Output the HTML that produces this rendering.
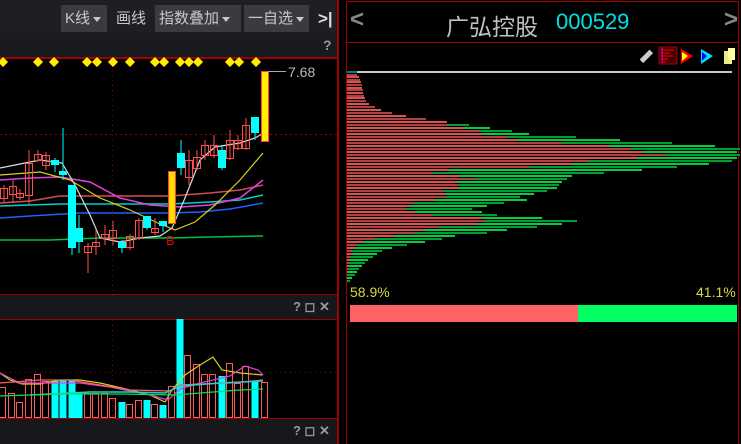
<!DOCTYPE html>
<html><head><meta charset="utf-8"><style>
*{margin:0;padding:0;box-sizing:border-box}
body{width:741px;height:444px;background:#000;overflow:hidden;position:relative;font-family:"Liberation Sans","Noto Sans CJK SC",sans-serif}
.a{position:absolute}
.btn{position:absolute;top:5px;height:27px;background:#3a3b41;color:#c8c8c8;font-size:15px;line-height:27px;padding:0 4px;white-space:nowrap}
.tri{display:inline-block;border-left:4px solid transparent;border-right:4px solid transparent;border-top:5px solid #c8c8c8;vertical-align:middle;margin-left:3px}
.hdr{position:absolute;left:0;width:338px;background:#17181c}
.ic{position:absolute;color:#9a9a9a;font-size:14px;font-weight:bold}
</style></head><body>
<div class="a" style="left:0;top:0;width:338px;height:33px;background:#1e1f25"></div>
<div class="btn" style="left:61px;width:46px">K线<span class="tri"></span></div>
<div class="a" style="left:116px;top:5px;color:#c8c8c8;font-size:15px;line-height:27px">画线</div>
<div class="btn" style="left:155px;width:86px">指数叠加<span class="tri"></span></div>
<div class="btn" style="left:244px;width:65px">一自选<span class="tri"></span></div>
<div class="a" style="left:318px;top:5px;color:#ddd;font-size:17px;font-weight:bold;line-height:27px">&gt;|</div>
<div class="hdr" style="top:33px;height:25px;background:#1a1b20"></div>
<div class="ic" style="left:323px;top:37px">?</div>
<div class="a" style="left:0;top:57px;width:338px;height:2px;background:#a00000"></div>
<div class="hdr" style="top:295px;height:24px"></div>
<div class="ic" style="left:293px;top:299px;font-size:13px">? ◻ ✕</div>
<div class="a" style="left:0;top:319px;width:338px;height:1px;background:#a00000"></div>
<div class="a" style="left:0;top:418px;width:338px;height:1px;background:#a00000"></div>
<div class="hdr" style="top:419px;height:25px"></div>
<div class="ic" style="left:293px;top:423px;font-size:13px">? ◻ ✕</div>
<div class="a" style="left:337px;top:0;width:2px;height:444px;background:#a00000"></div>
<div class="a" style="left:0;top:294px;width:338px;height:1px;background:#a00000"></div>
<div class="a" style="left:346px;top:1px;width:393px;height:443px;border:1px solid #a00000;border-bottom:none"></div>
<div class="a" style="left:346px;top:42px;width:393px;height:1px;background:#a00000"></div>
<div class="a" style="left:350px;top:6px;color:#888;font-size:24px;font-weight:bold">&lt;</div>
<div class="a" style="left:724px;top:6px;color:#888;font-size:24px;font-weight:bold">&gt;</div>
<div class="a" style="left:446px;top:8px;color:#c0c0c0;font-size:23px;font-family:'Noto Sans CJK SC',sans-serif">广弘控股</div>
<div class="a" style="left:556px;top:9px;color:#00e0e0;font-size:22px">000529</div>
<div class="a" style="left:350px;top:284px;color:#d8d840;font-size:14px">58.9%</div>
<div class="a" style="left:696px;top:284px;color:#d8d840;font-size:14px">41.1%</div>
<div class="a" style="left:350px;top:305px;width:228px;height:17px;background:#ff6262"></div>
<div class="a" style="left:578px;top:305px;width:159px;height:17px;background:#00ff60"></div>
<svg class="a" style="left:0;top:0" width="741" height="444" id="s">
<g transform="translate(640,46)">
<rect x="4" y="3" width="5" height="14" fill="#ccc" transform="rotate(45 6 10)"/>
<rect x="19" y="1" width="18" height="17" fill="#400" stroke="#a00" /><line x1="22" y1="2" x2="22" y2="17" stroke="#f0f"/><g stroke="#f00"><line x1="22" y1="4" x2="34" y2="4"/><line x1="22" y1="7" x2="30" y2="7"/><line x1="22" y1="10" x2="33" y2="10"/><line x1="22" y1="13" x2="28" y2="13"/><line x1="22" y1="16" x2="26" y2="16"/></g>
<polygon points="41,3 41,18 53,10" fill="#f00"/><polygon points="42,6 42,15 48,10" fill="#ff0"/>
<polygon points="61,3 61,18 73,10" fill="#00e0ff"/><polygon points="62,6 62,15 67,10" fill="#00f"/>
<rect x="84" y="5" width="8" height="13" fill="#ee8"/><rect x="88" y="2" width="7" height="12" fill="#ffffa0"/>
</g>
</svg>
<script>
var s=document.getElementById('s'),h='';
function L(x1,y1,x2,y2,c,w,d){h+='<line x1="'+x1+'" y1="'+y1+'" x2="'+x2+'" y2="'+y2+'" stroke="'+c+'" stroke-width="'+(w||1)+'"'+(d?' stroke-dasharray="'+d+'"':'')+'/>';}
function R(x,y,w,hh,f,st){h+='<rect x="'+x+'" y="'+y+'" width="'+w+'" height="'+hh+'" fill="'+f+'"'+(st?' stroke="'+st+'"':'')+'/>';}
function P(pts,c,w){h+='<polyline points="'+pts+'" fill="none" stroke="'+c+'" stroke-width="'+(w||1)+'"/>';}
L(0,134.5,338,134.5,'#a00000',1,'2,3');L(112.5,60,112.5,294,'#800000',1,'1,4');
L(0,372.5,338,372.5,'#800000',1,'1,4');L(112.5,320,112.5,418,'#800000',1,'1,4');
[3,38,54,87,97,113,130,155,164,180,189,198,230,239,256].forEach(function(x){h+='<polygon points="'+x+',57 '+(x+5)+',62 '+x+',67 '+(x-5)+',62" fill="#ffee00" stroke="#c08000" stroke-width="0.5"/>';});
P('0,240 50,240 100,238 170,238 210,237 263,236','#00c040',1.5);
P('0,218 30,216 80,213 170,213 200,212 230,209 263,203','#2060ff',1.5);
P('0,206 60,204 170,204 210,202 240,200 263,195','#00d0d0',1.5);
P('0,203 30,201 60,196 120,196 170,196 210,193 240,190 263,185','#d05050',1.5);
P('0,180 30,178 60,177 90,182 120,198 150,205 180,207 210,205 240,198 263,180','#e040e0',1.5);
P('0,175 40,172 70,180 100,198 130,210 160,224 175,230 195,222 215,205 240,180 263,153','#d8d020',1.2);
P('0,168 40,160 62,163 75,185 90,215 100,238 120,242 140,238 160,236 172,228 185,198 200,160 215,147 240,143 255,138 262,134','#ddd',1.2);
var C=[[4,188,198,185,202,'r'],[13,186,194,180,203,'r'],[20,193,197,189,200,'r'],[29,163,195,150,205,'r'],[38,154,160,150,162,'r'],[46,155,165,152,170,'r'],[55,160,165,158,172,'c'],[63,171,175,128,180,'c'],[72,185,248,185,255,'c'],[79,228,242,215,253,'c'],[88,246,252,243,273,'r'],[96,242,246,230,255,'r'],[105,234,238,225,245,'r'],[113,230,238,221,245,'r'],[122,242,248,240,253,'c'],[130,236,247,234,250,'r'],[139,220,238,218,240,'r'],[147,216,228,216,230,'c'],[155,228,232,218,235,'r'],[163,221,226,221,232,'c'],[181,153,168,140,175,'c'],[189,160,177,150,185,'r'],[197,157,168,150,170,'r'],[205,145,155,140,160,'r'],[214,145,155,135,158,'r'],[222,150,168,145,170,'c'],[230,140,158,130,160,'r'],[238,140,148,135,150,'r'],[246,125,148,118,150,'r'],[255,117,133,117,140,'c']];
C.forEach(function(c){var col=c[5]=='r'?'#ff5050':'#00ffff';L(c[0],c[3],c[0],c[4],col);if(c[5]=='r')R(c[0]-3.5,c[1]+.5,7,c[2]-c[1],'none',col);else R(c[0]-4,c[1],8,c[2]-c[1],col);});
R(168.5,171.5,7,52,'#ffdd00','#ff4040');
R(261.5,71.5,7,70,'#ffee00','#ff4040');
L(268,71.5,286,71.5,'#aaa');
h+='<text x="288" y="77" fill="#bbb" font-size="14" font-family="Liberation Sans">7.68</text>';
h+='<text x="166" y="245" fill="#e00000" font-size="13" font-family="Liberation Sans">B</text>';
var V=[[3,387,'r'],[12,393,'r'],[20,402,'r'],[29,379,'r'],[38,374,'r'],[46,381,'r'],[55,381,'c'],[63,380,'c'],[72,380,'c'],[79,393,'c'],[88,393,'r'],[96,393,'r'],[105,393,'r'],[113,398,'r'],[122,402,'c'],[130,404,'r'],[139,400,'r'],[147,400,'c'],[155,404,'r'],[163,405,'c'],[172,386,'r'],[180,319,'c'],[188,355,'r'],[197,364,'r'],[205,374,'r'],[213,374,'r'],[222,376,'c'],[230,363,'r'],[238,383,'r'],[246,366,'r'],[255,381,'c'],[265,382,'r']];
V.forEach(function(v){if(v[2]=='r')R(v[0]-3.5,v[1]+.5,6,418-v[1]-1,'none','#ff5a5a');else R(v[0]-3.5,v[1],7,418-v[1],'#00ffff');});
P('0,373 10,380 22,384 40,384 60,380 80,380 100,383 130,390 150,395 165,402 172,390 185,375 200,365 213,357 222,370 240,373 263,375','#d8d020',1.2);
P('0,373 20,383 50,383 80,383 110,387 150,395 168,400 180,389 200,383 230,376 245,366 258,370 263,375','#e040e0',1.2);
P('0,383 40,380 70,380 100,385 130,390 170,391 180,385 200,384 230,383 263,380','#ff6060',1.2);
P('30,395 90,392 130,392 165,393 180,386 220,383 263,381','#20d0d0',1.5);
P('0,396 60,394 120,394 175,395 200,393 240,390 263,389','#00e050',1.2);
var H=[[72,0,0],[74,10,0],[76,12,0],[79,13,0],[81,14,0],[84,15,0],[87,15,0],[89,16,0],[92,16,0],[95,17,0],[97,18,0],[100,19,0],[103,22,0],[106,28,0],[109,34,0],[112,45,0],[115,59,0],[118,79,0],[121,100,0],[124,100,122],[127,118,143],[130,132,165],[133,135,182],[136,160,229],[139,170,273],[142,215,325],[145,262,368],[148,285,393],[151,296,390],[154,320,393],[157,290,390],[160,242,385],[163,225,362],[166,183,330],[169,102,295],[172,85,257],[175,112,225],[178,130,220],[181,110,215],[184,112,212],[187,112,210],[190,96,200],[193,98,187],[196,100,173],[199,88,180],[202,68,157],[205,62,140],[208,58,125],[211,68,135],[214,85,150],[217,135,195],[220,138,230],[223,130,215],[226,92,190],[229,78,160],[232,67,140],[235,48,108],[238,28,95],[241,16,78],[244,10,60],[247,8,45],[250,5,35],[253,5,30],[256,3,26],[259,3,21],[262,2,18],[265,1,15],[268,1,12],[271,1,10],[274,0,8],[277,0,5],[280,0,3]];
R(347,71,385,2,'#c8c8c8');R(347,71,10,2,'#008080');
H.forEach(function(r,i){if(r[0]==72)return;var y=r[0];if(r[2]>0)R(347,y,r[2],2,i%2?'#00a030':'#00d040');R(347,y,r[1],2,i%2?'#b04040':'#e05050');});
s.innerHTML+=h;
</script>
</body></html>
